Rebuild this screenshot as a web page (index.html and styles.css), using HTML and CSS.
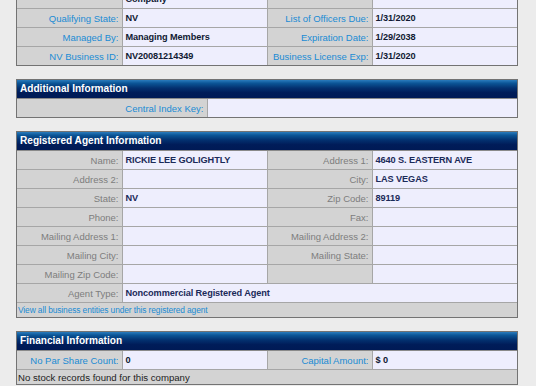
FILE: index.html
```html
<!DOCTYPE html>
<html>
<head>
<meta charset="utf-8">
<link rel="stylesheet" href="styles.css">
</head>
<body>
<div class="panel panel-top">
  <table class="grid">
    <colgroup><col class="c-lab"><col class="c-val"><col class="c-lab"><col class="c-val"></colgroup>
    <tr class="tall">
      <td class="lab blue">Entity Type:</td>
      <td class="val">Domestic Limited-Liability<br>Company</td>
      <td class="lab blue">Annual Report Due:</td>
      <td class="val"></td>
    </tr>
    <tr>
      <td class="lab blue">Qualifying State:</td>
      <td class="val">NV</td>
      <td class="lab blue">List of Officers Due:</td>
      <td class="val">1/31/2020</td>
    </tr>
    <tr>
      <td class="lab blue">Managed By:</td>
      <td class="val">Managing Members</td>
      <td class="lab blue">Expiration Date:</td>
      <td class="val">1/29/2038</td>
    </tr>
    <tr>
      <td class="lab blue">NV Business ID:</td>
      <td class="val">NV20081214349</td>
      <td class="lab blue">Business License Exp:</td>
      <td class="val">1/31/2020</td>
    </tr>
  </table>
</div>

<div class="panel">
  <div class="head">Additional Information</div>
  <table class="grid">
    <colgroup><col class="c-wide"><col></colgroup>
    <tr>
      <td class="lab blue">Central Index Key:</td>
      <td class="val"></td>
    </tr>
  </table>
</div>

<div class="panel">
  <div class="head">Registered Agent Information</div>
  <table class="grid">
    <colgroup><col class="c-lab"><col class="c-val"><col class="c-lab"><col class="c-val"></colgroup>
    <tr>
      <td class="lab gray">Name:</td>
      <td class="val navy">RICKIE LEE GOLIGHTLY</td>
      <td class="lab gray">Address 1:</td>
      <td class="val navy">4640 S. EASTERN AVE</td>
    </tr>
    <tr>
      <td class="lab gray">Address 2:</td>
      <td class="val navy"></td>
      <td class="lab gray">City:</td>
      <td class="val navy">LAS VEGAS</td>
    </tr>
    <tr>
      <td class="lab gray">State:</td>
      <td class="val navy">NV</td>
      <td class="lab gray">Zip Code:</td>
      <td class="val navy">89119</td>
    </tr>
    <tr>
      <td class="lab gray">Phone:</td>
      <td class="val navy"></td>
      <td class="lab gray">Fax:</td>
      <td class="val navy"></td>
    </tr>
    <tr>
      <td class="lab gray">Mailing Address 1:</td>
      <td class="val navy"></td>
      <td class="lab gray">Mailing Address 2:</td>
      <td class="val navy"></td>
    </tr>
    <tr>
      <td class="lab gray">Mailing City:</td>
      <td class="val navy"></td>
      <td class="lab gray">Mailing State:</td>
      <td class="val navy"></td>
    </tr>
    <tr>
      <td class="lab gray">Mailing Zip Code:</td>
      <td class="val navy"></td>
      <td class="lab gray"></td>
      <td class="val navy"></td>
    </tr>
    <tr>
      <td class="lab gray">Agent Type:</td>
      <td class="val navy" colspan="3">Noncommercial Registered Agent</td>
    </tr>
    <tr class="short">
      <td class="note" colspan="4"><a href="#" class="link">View all business entities under this registered agent</a></td>
    </tr>
  </table>
</div>

<div class="panel">
  <div class="head">Financial Information</div>
  <table class="grid">
    <colgroup><col class="c-lab"><col class="c-val"><col class="c-lab"><col class="c-val"></colgroup>
    <tr>
      <td class="lab blue">No Par Share Count:</td>
      <td class="val">0</td>
      <td class="lab blue">Capital Amount:</td>
      <td class="val">$ 0</td>
    </tr>
    <tr class="short">
      <td class="note plain" colspan="4">No stock records found for this company</td>
    </tr>
  </table>
</div>
</body>
</html>
```

FILE: styles.css
```css
html, body {
  margin: 0;
  padding: 0;
}
body {
  background: #ececec;
  font-family: "Liberation Sans", Arial, sans-serif;
  overflow: hidden;
}
.panel {
  margin: 0 0 13px 16px;
  width: 500px;
  border: 1px solid #737373;
  background: #d3d3d3;
}
.panel-top {
  margin-top: -22px;
}
.head {
  height: 18px;
  line-height: 17px;
  padding-left: 3px;
  color: #ffffff;
  font-weight: bold;
  font-size: 10.1px;
  background: linear-gradient(#2a7cbd 0%, #0b5596 18%, #03306f 45%, #001c59 70%, #001a55 100%);
  border-bottom: 1px solid #8a8a8a;
}
.grid {
  width: 100%;
  border-collapse: collapse;
  table-layout: fixed;
}
.c-lab { width: 21%; }
.c-val { width: 29%; }
.c-wide { width: 38%; }
.grid td {
  height: 18px;
  padding: 0 3px;
  border: 1px solid #a6a6a6;
  font-size: 9.5px;
  line-height: 11px;
  white-space: nowrap;
  overflow: hidden;
}
.grid tr:first-child td { border-top: none; }
.grid tr:last-child td { border-bottom: none; }
.grid td:first-child { border-left: none; }
.grid td:last-child { border-right: none; }
.grid tr.tall td { height: 29px; }
.grid tr.short td { height: 14px; }
.lab {
  background: #d3d3d3;
  text-align: right;
}
.blue { color: #1a8bd3; }
.gray { color: #7d7d7d; }
.val {
  background: #eeeefd;
  color: #111a33;
  font-weight: bold;
  letter-spacing: -0.1px;
}
.grid td.val { font-size: 9.2px; }
.navy { color: #1b2a59; }
.note {
  background: #d3d3d3;
}
.grid td.note { padding-left: 1px; }
.link {
  color: #1a8bd3;
  font-size: 8.4px;
  text-decoration: none;
  letter-spacing: -0.1px;
}
.grid td.plain {
  color: #222222;
  font-size: 9.6px;
}
```
